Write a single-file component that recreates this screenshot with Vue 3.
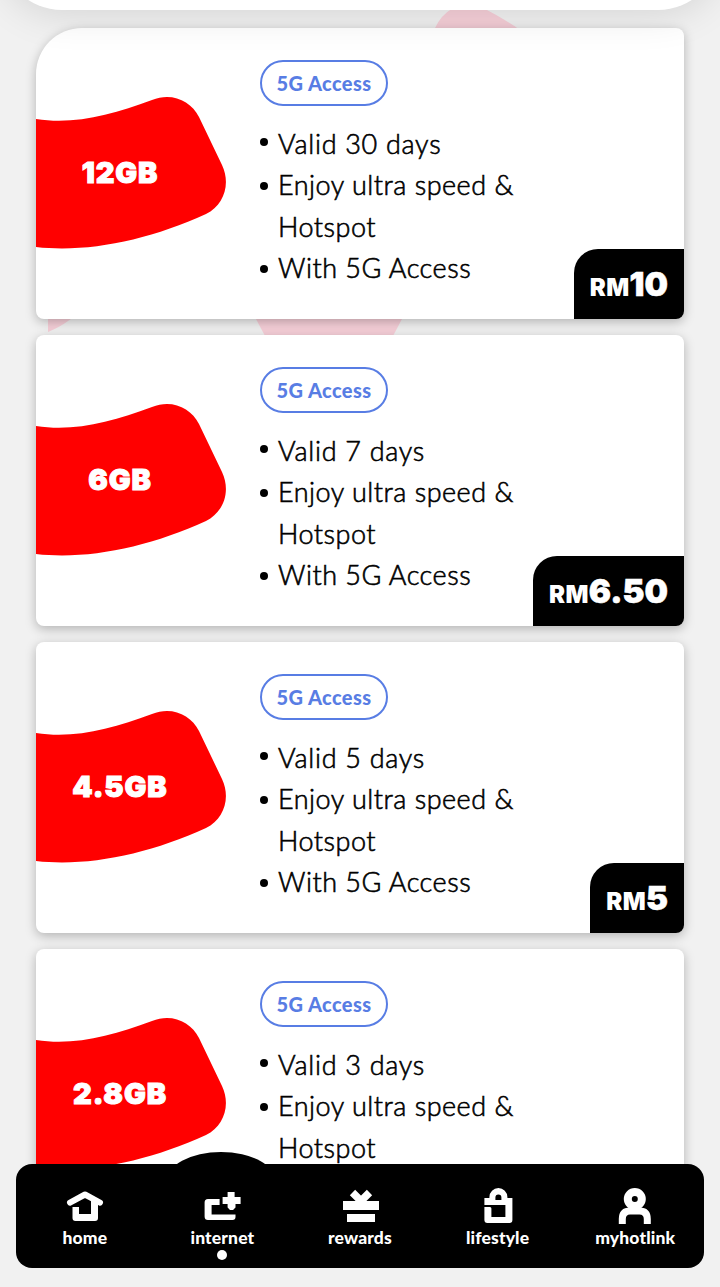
<script setup>
const plans = [
  { data: '12GB', validity: 'Valid 30 days', price: '10' },
  { data: '6GB', validity: 'Valid 7 days', price: '6.50' },
  { data: '4.5GB', validity: 'Valid 5 days', price: '5' },
  { data: '2.8GB', validity: 'Valid 3 days', price: '3' }
]

const tabs = ['home', 'internet', 'rewards', 'lifestyle', 'myhotlink']
const active = 'internet'
</script>

<template>
  <div class="screen">
    <svg class="pattern" width="720" height="340" viewBox="0 0 720 340">
      <path d="M435 28Q441 15 453 8H482Q489 10 516 27L530 40H425Z" />
      <path d="M48 310H84L68 321Q60 327 48 332Z" />
      <path d="M246 300L265 336H393L412 300Z" />
    </svg>
    <div class="header"></div>

    <main class="plans">
      <article v-for="plan in plans" :key="plan.data" class="plan">
        <div class="quota">
          <svg class="blob" width="190" height="154" viewBox="0 0 190 154">
            <path d="M0 22C38 28 76 18 116 3C136-5 155 4 163 20L186 68C195 87 188 108 170 117C113 143 52 156 0 150Z" fill="#f00" />
          </svg>
          <span class="quota-text">{{ plan.data }}</span>
        </div>
        <div class="details">
          <span class="tag">5G Access</span>
          <ul>
            <li>{{ plan.validity }}</li>
            <li>Enjoy ultra speed &amp;<br>Hotspot</li>
            <li>With 5G Access</li>
          </ul>
        </div>
        <div class="price"><small>RM</small><b>{{ plan.price }}</b></div>
      </article>
    </main>

    <nav class="tabbar">
      <div class="hump"></div>
      <a v-for="tab in tabs" :key="tab" class="tab">
        <svg width="50" height="50" viewBox="0 0 50 50" fill="#fff">
          <g v-if="tab === 'home'">
            <path d="M10 22.6L25 14.5L40 22.6" fill="none" stroke="#fff" stroke-width="6" stroke-linejoin="round" stroke-linecap="round" />
            <path d="M12.5 27H19V34H31V18H38V38Q38 41 35 41H15.5Q12.5 41 12.5 38Z" />
          </g>
          <g v-else-if="tab === 'internet'">
            <path d="M11 19H22.6V25H14.6V34.5H38.5V37Q38.5 40 35.500 40H11Q7.6 40 7.6 36.5V22.5Q7.6 19 11 19Z" />
            <path d="M30.6 12H37.6V17H43.6V24H38.5V27.5L36 30H33L30.6 27.5V24H25.6V17H30.6Z" />
          </g>
          <g v-else-if="tab === 'rewards'">
            <path d="M8 21H44V30H8ZM12 34H40V42H12Z" />
            <path d="M17.5 12.5L27 22M34.5 12.5L25 22" stroke="#fff" stroke-width="7.5" />
          </g>
          <g v-else-if="tab === 'lifestyle'" fill-rule="evenodd">
            <path d="M16.4 18V17A9 9 0 0 1 34.4 17V18H39.4V40Q39.4 43 36.4 43H14.4Q11.4 43 11.4 40V27H17Q18.4 27 18.4 28.5V37H32.4V25H11.4V18ZM22.4 20H28.4V17.5A3 3 0 0 0 22.4 17.5Z" />
          </g>
          <g v-else fill="none" stroke="#fff">
            <circle cx="24.8" cy="19" r="7" stroke-width="8" />
            <path d="M12.3 44V39Q12.3 31 20 31H29.5Q37.3 31 37.3 39V44" stroke-width="7" />
          </g>
        </svg>
        <span class="label">{{ tab }}</span>
        <i v-if="tab === active" class="dot"></i>
      </a>
    </nav>
  </div>
</template>

<style>
body {
  margin: 0;
}
</style>

<style scoped>
* {
  box-sizing: border-box;
}

.screen {
  position: relative;
  width: 720px;
  height: 1287px;
  overflow: hidden;
  background: #f1f1f1;
  font-family: Lato, sans-serif;
  color: #000;
}

.pattern {
  position: absolute;
  top: 0;
  left: 0;
  fill: #f6cfd8;
}

.header {
  position: absolute;
  z-index: 1;
  top: -110px;
  left: 0;
  width: 720px;
  height: 120px;
  border-radius: 0 0 62px 62px;
  background: #fff;
  box-shadow: 0 4px 40px rgba(0, 0, 0, 0.12);
}

.plans {
  position: relative;
  display: flex;
  flex-direction: column;
  gap: 16px;
  padding: 28px 36px 0;
}

.plan {
  position: relative;
  display: flex;
  flex: none;
  height: 291px;
  border-radius: 8px;
  background: #fff;
  box-shadow: 0 3px 11px rgba(0, 0, 0, 0.26);
}

.plan:first-child {
  border-top-left-radius: 46px;
}

.quota {
  position: relative;
  width: 224px;
  padding-top: 69px;
}

.blob {
  display: block;
}

.quota-text {
  position: absolute;
  top: 126px;
  left: 0;
  width: 168px;
  text-align: center;
  font-family: Inter, sans-serif;
  font-size: 29px;
  font-weight: 900;
  line-height: 38px;
  letter-spacing: 0.9px;
  -webkit-text-stroke: 1px #fff;
  color: #fff;
}

.details {
  padding-top: 32px;
}

.tag {
  display: block;
  width: 128px;
  height: 46px;
  border: 2px solid #587de4;
  border-radius: 23px;
  text-align: center;
  font-size: 20px;
  font-weight: 900;
  line-height: 43px;
  letter-spacing: 0.4px;
  color: #587de4;
}

ul {
  margin: 17px 0 0;
  padding: 0;
  list-style: none;
}

li {
  position: relative;
  padding-left: 18px;
  font-size: 27px;
  font-weight: 300;
  line-height: 41.4px;
  letter-spacing: 0.5px;
  white-space: nowrap;
  -webkit-text-stroke: 0.6px #000;
}

li::before {
  content: '';
  position: absolute;
  left: 0;
  top: 17.5px;
  width: 8px;
  height: 8px;
  border-radius: 50%;
  background: #000;
}

li:first-child {
  letter-spacing: 0.7px;
}

li:first-child::before {
  top: 15px;
}

.price {
  position: absolute;
  right: 0;
  bottom: 0;
  height: 70px;
  padding: 0 16px;
  border-radius: 24px 0 8px 0;
  background: #000;
  font-family: Inter, sans-serif;
  line-height: 70px;
  white-space: nowrap;
  color: #fff;
}

.price small {
  font-size: 24px;
  font-weight: 900;
  letter-spacing: 0.4px;
}

.price b {
  font-size: 33px;
  font-weight: 900;
  -webkit-text-stroke: 0.6px #fff;
}

.tabbar {
  position: absolute;
  z-index: 2;
  left: 16px;
  bottom: 19px;
  display: flex;
  width: 688px;
  height: 104px;
  border-radius: 16px;
  background: #000;
}

.hump {
  position: absolute;
  top: -12px;
  left: 150px;
  width: 110px;
  height: 60px;
  border-radius: 50%;
  background: #000;
}

.tab {
  position: relative;
  display: flex;
  flex: 1;
  flex-direction: column;
  align-items: center;
  padding-top: 16px;
}

.label {
  margin-top: -4px;
  font-size: 17.5px;
  font-weight: 900;
  line-height: 24px;
  letter-spacing: 0.15px;
  color: #fff;
}

.dot {
  width: 10px;
  height: 10px;
  border-radius: 50%;
  background: #fff;
}
</style>
